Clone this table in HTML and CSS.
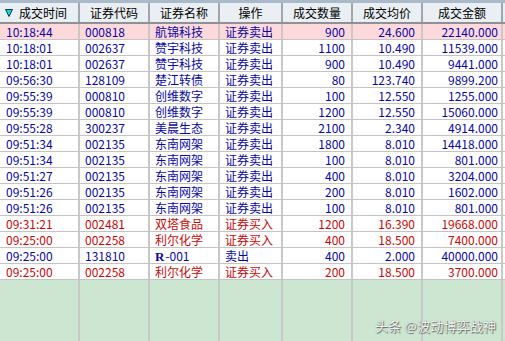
FILE: index.html
```html
<!DOCTYPE html>
<html lang="zh-CN">
<head>
<meta charset="utf-8">
<title>成交查询</title>
<link rel="stylesheet" href="styles.css">
</head>
<body>
<div class="app">
  <div class="topbar"></div>
  <div class="row head">
    <div class="cell hc first"><svg class="sort" width="8" height="8" viewBox="0 0 8 8"><polygon points="0.5,0.5 7.5,0.5 4,7.5" fill="#10d8e0" stroke="#0a3a4a" stroke-width="1"/></svg><span>成交时间</span></div>
    <div class="cell hc">证券代码</div>
    <div class="cell hc">证券名称</div>
    <div class="cell hc">操作</div>
    <div class="cell hc">成交数量</div>
    <div class="cell hc">成交均价</div>
    <div class="cell hc">成交金额</div>
  </div>

  <div class="row sel blue">
    <div class="cell t">10:18:44</div><div class="cell c">000818</div><div class="cell n">航锦科技</div><div class="cell o">证券卖出</div><div class="cell q">900</div><div class="cell p">24.600</div><div class="cell a">22140.000</div>
  </div>
  <div class="row blue">
    <div class="cell t">10:18:01</div><div class="cell c">002637</div><div class="cell n">赞宇科技</div><div class="cell o">证券卖出</div><div class="cell q">1100</div><div class="cell p">10.490</div><div class="cell a">11539.000</div>
  </div>
  <div class="row blue">
    <div class="cell t">10:18:01</div><div class="cell c">002637</div><div class="cell n">赞宇科技</div><div class="cell o">证券卖出</div><div class="cell q">900</div><div class="cell p">10.490</div><div class="cell a">9441.000</div>
  </div>
  <div class="row blue">
    <div class="cell t">09:56:30</div><div class="cell c">128109</div><div class="cell n">楚江转债</div><div class="cell o">证券卖出</div><div class="cell q">80</div><div class="cell p">123.740</div><div class="cell a">9899.200</div>
  </div>
  <div class="row blue">
    <div class="cell t">09:55:39</div><div class="cell c">000810</div><div class="cell n">创维数字</div><div class="cell o">证券卖出</div><div class="cell q">100</div><div class="cell p">12.550</div><div class="cell a">1255.000</div>
  </div>
  <div class="row blue">
    <div class="cell t">09:55:39</div><div class="cell c">000810</div><div class="cell n">创维数字</div><div class="cell o">证券卖出</div><div class="cell q">1200</div><div class="cell p">12.550</div><div class="cell a">15060.000</div>
  </div>
  <div class="row blue">
    <div class="cell t">09:55:28</div><div class="cell c">300237</div><div class="cell n">美晨生态</div><div class="cell o">证券卖出</div><div class="cell q">2100</div><div class="cell p">2.340</div><div class="cell a">4914.000</div>
  </div>
  <div class="row blue">
    <div class="cell t">09:51:34</div><div class="cell c">002135</div><div class="cell n">东南网架</div><div class="cell o">证券卖出</div><div class="cell q">1800</div><div class="cell p">8.010</div><div class="cell a">14418.000</div>
  </div>
  <div class="row blue">
    <div class="cell t">09:51:34</div><div class="cell c">002135</div><div class="cell n">东南网架</div><div class="cell o">证券卖出</div><div class="cell q">100</div><div class="cell p">8.010</div><div class="cell a">801.000</div>
  </div>
  <div class="row blue">
    <div class="cell t">09:51:27</div><div class="cell c">002135</div><div class="cell n">东南网架</div><div class="cell o">证券卖出</div><div class="cell q">400</div><div class="cell p">8.010</div><div class="cell a">3204.000</div>
  </div>
  <div class="row blue">
    <div class="cell t">09:51:26</div><div class="cell c">002135</div><div class="cell n">东南网架</div><div class="cell o">证券卖出</div><div class="cell q">200</div><div class="cell p">8.010</div><div class="cell a">1602.000</div>
  </div>
  <div class="row blue">
    <div class="cell t">09:51:26</div><div class="cell c">002135</div><div class="cell n">东南网架</div><div class="cell o">证券卖出</div><div class="cell q">100</div><div class="cell p">8.010</div><div class="cell a">801.000</div>
  </div>
  <div class="row red">
    <div class="cell t">09:31:21</div><div class="cell c">002481</div><div class="cell n">双塔食品</div><div class="cell o">证券买入</div><div class="cell q">1200</div><div class="cell p">16.390</div><div class="cell a">19668.000</div>
  </div>
  <div class="row red">
    <div class="cell t">09:25:00</div><div class="cell c">002258</div><div class="cell n">利尔化学</div><div class="cell o">证券买入</div><div class="cell q">400</div><div class="cell p">18.500</div><div class="cell a">7400.000</div>
  </div>
  <div class="row blue">
    <div class="cell t">09:25:00</div><div class="cell c">131810</div><div class="cell n"><b class="rr">R</b>-001</div><div class="cell o">卖出</div><div class="cell q">400</div><div class="cell p">2.000</div><div class="cell a">40000.000</div>
  </div>
  <div class="row red">
    <div class="cell t">09:25:00</div><div class="cell c">002258</div><div class="cell n">利尔化学</div><div class="cell o">证券买入</div><div class="cell q">200</div><div class="cell p">18.500</div><div class="cell a">3700.000</div>
  </div>

  <div class="row filler">
    <div class="cell"></div><div class="cell"></div><div class="cell"></div><div class="cell"></div><div class="cell"></div><div class="cell"></div><div class="cell"></div>
  </div>

  <div class="watermark">头条 @波动博弈战神</div>
</div>
</body>
</html>
```

FILE: styles.css
```css
* { box-sizing: border-box; }
html, body { margin: 0; padding: 0; }
body {
  width: 505px;
  height: 341px;
  overflow: hidden;
  background: #ffffff;
  font-family: "Noto Sans CJK SC", "Noto Sans", sans-serif;
  font-size: 12px;
}
.app {
  position: relative;
  width: 505px;
  height: 341px;
  display: flex;
  flex-direction: column;
}
.topbar {
  height: 3px;
  background: #a9b9c9;
  flex: none;
}
.row {
  display: grid;
  grid-template-columns: 80px 70px 70px 63px 70px 70px 80px;
  height: 16px;
  border-bottom: 1px solid #c4c4c4;
  background: #ffffff;
  flex: none;
}
.cell {
  border-right: 2px solid #c8c8c8;
  padding: 0 5px;
  line-height: 16px;
  white-space: nowrap;
  overflow: hidden;
}
.head {
  height: 21px;
  background: #e9eff3;
  border-bottom: 2px solid #8e9296;
}
.hc {
  border-right: 2px solid #a2a6aa;
  text-align: center;
  color: #000;
  line-height: 19px;
  padding: 0;
}
.hc.first {
  display: flex;
  align-items: center;
  padding-left: 5px;
  gap: 6px;
}
.sort { flex: none; margin-top: 1px; }
.sel { background: #fdd9dc; }
.blue { color: #0808a6; }
.red { color: #c80808; }
.t { padding-left: 6px; }
.q, .p { text-align: right; padding-right: 6px; }
.a { text-align: right; padding-right: 3px; }
.rr {
  font-family: "Liberation Serif", "DejaVu Serif", serif;
  font-weight: bold;
  font-size: 13px;
  margin-right: 1px;
}
.filler {
  flex: 1;
  height: auto;
  background: #cde6d1;
  border-bottom: none;
}
.watermark {
  position: absolute;
  left: 375px;
  top: 316px;
  font-size: 13px;
  color: #f4f4f4;
  letter-spacing: 0.2px;
  text-shadow: 1px 1px 1px rgba(0, 0, 0, 0.55), 0 0 1px rgba(0, 0, 0, 0.35);
}
```
